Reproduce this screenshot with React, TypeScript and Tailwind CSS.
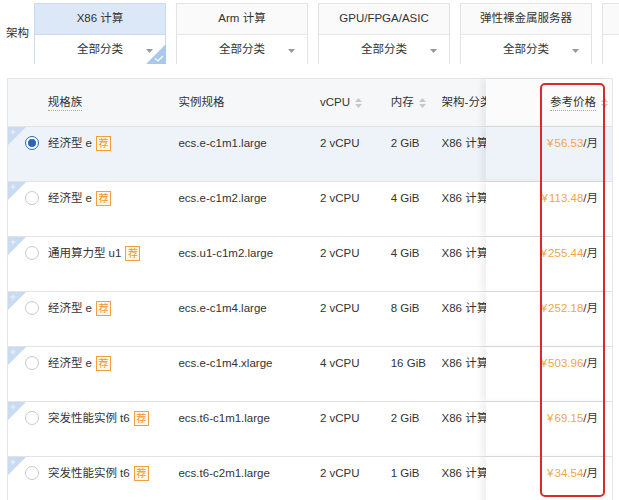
import React from 'react';

type Row = {
  family: string;
  spec: string;
  cpu: string;
  mem: string;
  price: string;
};

const rows: Row[] = [
  { family: '经济型 e', spec: 'ecs.e-c1m1.large', cpu: '2 vCPU', mem: '2 GiB', price: '56.53' },
  { family: '经济型 e', spec: 'ecs.e-c1m2.large', cpu: '2 vCPU', mem: '4 GiB', price: '113.48' },
  { family: '通用算力型 u1', spec: 'ecs.u1-c1m2.large', cpu: '2 vCPU', mem: '4 GiB', price: '255.44' },
  { family: '经济型 e', spec: 'ecs.e-c1m4.large', cpu: '2 vCPU', mem: '8 GiB', price: '252.18' },
  { family: '经济型 e', spec: 'ecs.e-c1m4.xlarge', cpu: '4 vCPU', mem: '16 GiB', price: '503.96' },
  { family: '突发性能实例 t6', spec: 'ecs.t6-c1m1.large', cpu: '2 vCPU', mem: '2 GiB', price: '69.15' },
  { family: '突发性能实例 t6', spec: 'ecs.t6-c2m1.large', cpu: '2 vCPU', mem: '1 GiB', price: '34.54' },
];

const archs = ['X86 计算', 'Arm 计算', 'GPU/FPGA/ASIC', '弹性裸金属服务器', '超级计算集群'];

const Caret = () => (
  <svg width="7" height="4" viewBox="0 0 7 4" className="absolute right-[12px] top-[14px]">
    <polygon points="0,0 7,0 3.5,4" fill="#999" />
  </svg>
);

const Sort = () => (
  <svg width="7" height="10" viewBox="0 0 7 10" className="ml-[5px] shrink-0">
    <polygon points="3.5,0 7,4 0,4" fill="#c5c8ce" />
    <polygon points="0,6 7,6 3.5,10" fill="#c5c8ce" />
  </svg>
);

const Corner = () => (
  <svg width="18" height="18" viewBox="0 0 18 18" className="absolute left-0 top-0">
    <polygon points="0,0 18,0 0,18" fill="#c8dbf1" />
    <path d="M5 2.5v5M2.5 5h5" stroke="#eef4fb" strokeWidth="1" />
  </svg>
);

export default function App() {
  return (
    <div
      className="relative w-[619px] h-[500px] overflow-hidden bg-white text-[#333] text-[11.5px]"
      style={{ fontFamily: '"Liberation Sans", "Noto Sans CJK SC", sans-serif' }}
    >
      {/* architecture selector */}
      <div className="flex items-center pt-[3px] pl-[6px]">
        <div className="w-[28px] shrink-0 whitespace-nowrap">架构</div>
        <div className="flex gap-[10px] shrink-0">
          {archs.map((a, i) => (
            <div
              key={a}
              className={`relative w-[132px] h-[61px] shrink-0 border whitespace-nowrap ${
                i === 0 ? 'border-[#c9d9ee]' : 'border-[#e3e3e3]'
              }`}
            >
              <div
                className={`h-[31px] flex items-center justify-center border-b ${
                  i === 0 ? 'bg-[#dce8f7] border-[#c9d9ee]' : 'bg-[#fafafa] border-[#e6e6e6]'
                }`}
              >
                {a}
              </div>
              <div className="relative h-[29px] flex items-center justify-center bg-white">
                全部分类
                <Caret />
              </div>
              {i === 0 && (
                <svg width="20" height="20" viewBox="0 0 20 20" className="absolute right-[-1px] bottom-[-1px]">
                  <polygon points="20,0 20,20 0,20" fill="#a9c9ec" />
                  <path d="M9 14.5l3 2.5 5-5" stroke="#fff" strokeWidth="1.2" fill="none" />
                </svg>
              )}
            </div>
          ))}
        </div>
      </div>

      {/* table */}
      <div className="ml-[7px] mt-[14px] w-[606px] border-l border-t border-r border-[#e6e6e6]">
        <div className="flex h-[48px] bg-[#f6f7f9] border-b border-[#e3e3e3]">
          <div className="w-[40px]" />
          <div className="w-[131px] flex items-center">
            <span className="border-b border-dotted border-[#aaa] leading-[16px]">规格族</span>
          </div>
          <div className="w-[142px] flex items-center">实例规格</div>
          <div className="w-[71px] flex items-center">
            vCPU
            <Sort />
          </div>
          <div className="w-[51px] flex items-center">
            内存
            <Sort />
          </div>
          <div className="w-[45px] flex items-center overflow-hidden whitespace-nowrap">架构-分类</div>
          <div className="w-[126px] flex items-center justify-end pr-[4px] bg-[#fbfbfc] shadow-[-5px_0_6px_rgba(0,0,0,0.06)]">
            <span className="border-b border-dotted border-[#aaa] leading-[16px]">参考价格</span>
            <Sort />
          </div>
        </div>

        {rows.map((r, i) => {
          const sel = i === 0;
          return (
            <div
              key={i}
              className={`relative flex h-[55px] border-b border-[#e3e3e3] leading-[16px] ${
                sel ? 'bg-[#eef3f9]' : 'bg-white'
              }`}
            >
              <Corner />
              <div className="w-[40px] pl-[17px] pt-[9px]">
                <div
                  className={`w-[14px] h-[14px] rounded-full border bg-white flex items-center justify-center ${
                    sel ? 'border-[#2a66b8]' : 'border-[#c9c9c9]'
                  }`}
                >
                  {sel && <div className="w-[8px] h-[8px] rounded-full bg-[#2a66b8]" />}
                </div>
              </div>
              <div className="w-[131px] pt-[8px] flex items-start">
                <span>{r.family}</span>
                <span className="ml-[4px] mt-[1px] w-[15px] h-[15px] border border-[#f2a03d] bg-[#fff7ec] text-[#f0962c] text-[10px] leading-[13px] text-center">
                  荐
                </span>
              </div>
              <div className="w-[142px] pt-[8px]">{r.spec}</div>
              <div className="w-[71px] pt-[8px]">{r.cpu}</div>
              <div className="w-[51px] pt-[8px]">{r.mem}</div>
              <div className="w-[45px] pt-[8px] overflow-hidden whitespace-nowrap">X86 计算</div>
              <div
                className={`w-[126px] pt-[8px] pr-[14px] text-right shadow-[-5px_0_6px_rgba(0,0,0,0.06)] ${
                  sel ? 'bg-[#eef3f9]' : 'bg-white'
                }`}
              >
                <span className="text-[#f2a548]">
                  <span className="mr-[1px]">¥</span>
                  {r.price}
                </span>
                /月
              </div>
            </div>
          );
        })}
      </div>

      <div className="absolute left-[540px] top-[83px] w-[65px] h-[414px] border-2 border-[#d92a2a] rounded-[5px]" />
    </div>
  );
}
